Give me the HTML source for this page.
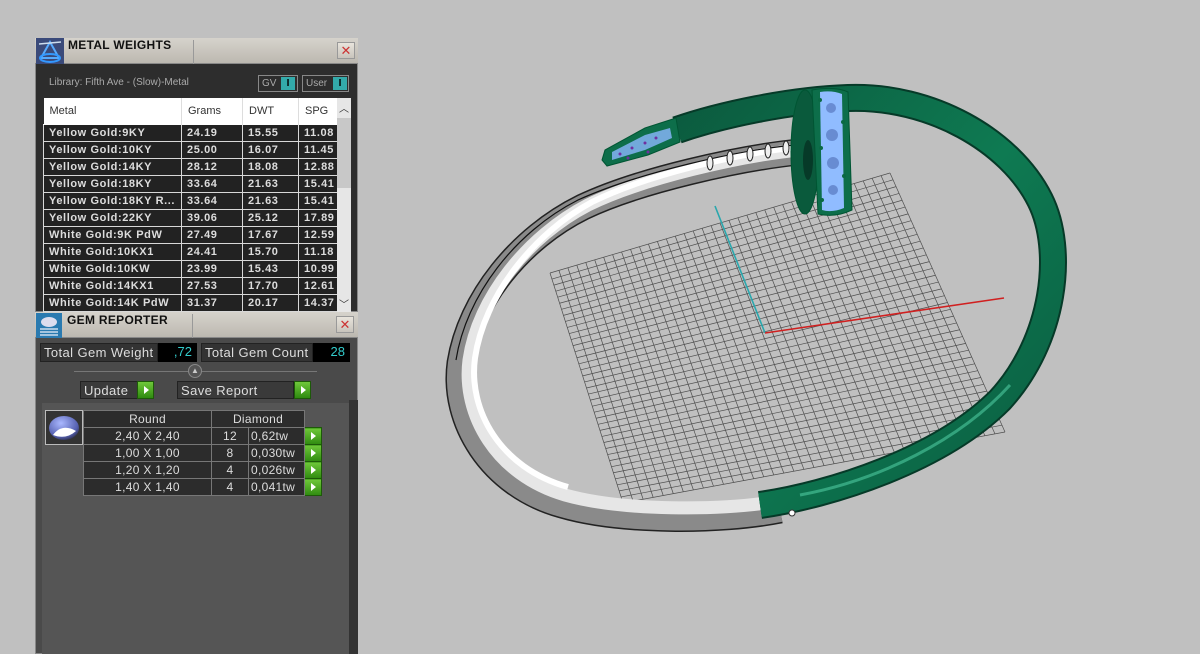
<!DOCTYPE html>
<html><head><meta charset="utf-8">
<style>
*{margin:0;padding:0;box-sizing:border-box}
body{width:1200px;height:654px;background:#c0c0c0;position:relative;overflow:hidden;font-family:"Liberation Sans","DejaVu Sans",sans-serif}
.a{position:absolute}
.title{background:linear-gradient(#d6d3cc,#bcb8b0);border-bottom:1px solid #888}
.close{width:18px;height:17px;background:linear-gradient(#e8e4dc,#c8c4bc);border:1px solid #999;color:#c33;font-size:13px;line-height:15px;text-align:center}
table{border-collapse:collapse}
.mt td{height:17px;border:1px solid #d8d8d8;border-top:1px solid #fff;color:#ddd;font-size:11px;font-weight:bold;letter-spacing:.6px;padding-left:5px;background:#222;white-space:nowrap;overflow:hidden}
.mt th{height:26px;background:#fff;color:#333;font-size:11px;font-weight:normal;text-align:left;padding-left:6px;border-right:1px solid #ddd}
.gt td{height:17px;border:1px solid #777;color:#ddd;font-size:12px;letter-spacing:.3px;text-align:center;background:#2c2c2c}
.gb,.gt td.gb{background:linear-gradient(#6fc83a,#2f8a10);border:1px solid #1d5a08}
.gb:after{content:"";position:absolute;left:6px;top:4px;border-left:5px solid #fff;border-top:4px solid transparent;border-bottom:4px solid transparent}
.fld{background:#333;border:1px solid #222;color:#ddd;font-size:13px;letter-spacing:.4px;padding-left:3px;line-height:17px}
.val{background:#000;color:#3cc;font-size:13px;text-align:right;padding-right:5px;line-height:17px}
</style></head><body>

<div class="a" style="left:35px;top:38px;width:323px;height:274px;background:#2d2d2d;border:1px solid #888"></div>
<div class="a title" style="left:35px;top:38px;width:323px;height:26px"></div>
<div class="a" style="left:193px;top:40px;width:1px;height:24px;background:#999"></div>
<svg class="a" style="left:36px;top:38px" width="28" height="26"><rect width="28" height="26" fill="#3a4a7a"/><path d="M14 4 L5 20 L23 20 Z" fill="none" stroke="#5af" stroke-width="2"/><ellipse cx="14" cy="20" rx="10" ry="4" fill="none" stroke="#39f" stroke-width="2"/><line x1="3" y1="6" x2="25" y2="4" stroke="#cde" stroke-width="1.5"/></svg>
<div class="a" style="left:68px;top:38px;font-size:12px;font-weight:bold;color:#111;letter-spacing:.3px">METAL WEIGHTS</div>
<div class="a close" style="left:337px;top:42px">✕</div>
<div class="a" style="left:49px;top:77px;font-size:10px;color:#aaa">Library: Fifth Ave - (Slow)-Metal</div>
<div class="a" style="left:258px;top:75px;width:40px;height:17px;border:1px solid #888;color:#aaa;font-size:10px;line-height:15px;padding-left:3px">GV<span class="a" style="left:22px;top:1px;width:14px;height:13px;background:#3aa;color:#000;text-align:center;font-weight:bold;line-height:13px">I</span></div>
<div class="a" style="left:302px;top:75px;width:47px;height:17px;border:1px solid #888;color:#aaa;font-size:10px;line-height:15px;padding-left:3px">User<span class="a" style="left:30px;top:1px;width:14px;height:13px;background:#3aa;color:#000;text-align:center;font-weight:bold;line-height:13px">I</span></div>
<div class="a" style="left:43px;top:98px;width:294px;height:214px;overflow:hidden">
<table class="mt" style="width:294px;table-layout:fixed">
<colgroup><col style="width:138px"><col style="width:61px"><col style="width:56px"><col style="width:39px"></colgroup>
<tr><th>Metal</th><th>Grams</th><th>DWT</th><th>SPG</th></tr>
<tr><td>Yellow Gold:9KY</td><td>24.19</td><td>15.55</td><td>11.08</td></tr>
<tr><td>Yellow Gold:10KY</td><td>25.00</td><td>16.07</td><td>11.45</td></tr>
<tr><td>Yellow Gold:14KY</td><td>28.12</td><td>18.08</td><td>12.88</td></tr>
<tr><td>Yellow Gold:18KY</td><td>33.64</td><td>21.63</td><td>15.41</td></tr>
<tr><td>Yellow Gold:18KY R...</td><td>33.64</td><td>21.63</td><td>15.41</td></tr>
<tr><td>Yellow Gold:22KY</td><td>39.06</td><td>25.12</td><td>17.89</td></tr>
<tr><td>White Gold:9K PdW</td><td>27.49</td><td>17.67</td><td>12.59</td></tr>
<tr><td>White Gold:10KX1</td><td>24.41</td><td>15.70</td><td>11.18</td></tr>
<tr><td>White Gold:10KW</td><td>23.99</td><td>15.43</td><td>10.99</td></tr>
<tr><td>White Gold:14KX1</td><td>27.53</td><td>17.70</td><td>12.61</td></tr>
<tr><td>White Gold:14K PdW</td><td>31.37</td><td>20.17</td><td>14.37</td></tr>
</table></div>
<div class="a" style="left:337px;top:98px;width:14px;height:214px;background:#e6e6e6"></div>
<div class="a" style="left:337px;top:118px;width:14px;height:70px;background:#c8c8c8"></div>
<div class="a" style="left:339px;top:100px;font-size:10px;color:#333">︿</div>
<div class="a" style="left:339px;top:296px;font-size:10px;color:#333">﹀</div>

<div class="a" style="left:35px;top:312px;width:323px;height:342px;background:#4a4a4a;border:1px solid #888"></div>
<div class="a" style="left:349px;top:400px;width:9px;height:254px;background:#333"></div>
<div class="a title" style="left:35px;top:312px;width:323px;height:26px"></div>
<div class="a" style="left:192px;top:314px;width:1px;height:24px;background:#999"></div>
<svg class="a" style="left:36px;top:313px" width="26" height="25"><rect width="26" height="25" fill="#2a7ab0"/><ellipse cx="13" cy="9" rx="8" ry="5" fill="#dde"/><g stroke="#cde" stroke-width="1.5"><line x1="4" y1="16" x2="22" y2="16"/><line x1="4" y1="19" x2="22" y2="19"/><line x1="4" y1="22" x2="22" y2="22"/></g></svg>
<div class="a" style="left:67px;top:313px;font-size:12px;font-weight:bold;color:#111;letter-spacing:.3px">GEM REPORTER</div>
<div class="a close" style="left:336px;top:316px">✕</div>
<div class="a" style="left:42px;top:403px;width:307px;height:251px;background:#555"></div>

<div class="a fld" style="left:40px;top:343px;width:118px;height:19px">Total Gem Weight</div>
<div class="a val" style="left:158px;top:343px;width:39px;height:19px">,72</div>
<div class="a fld" style="left:201px;top:343px;width:112px;height:19px">Total Gem Count</div>
<div class="a val" style="left:313px;top:343px;width:37px;height:19px">28</div>
<div class="a" style="left:74px;top:371px;width:243px;height:1px;background:#777"></div>
<div class="a" style="left:188px;top:364px;width:14px;height:14px;border-radius:50%;background:#555;border:1px solid #888;color:#ccc;font-size:8px;text-align:center;line-height:12px">▲</div>
<div class="a fld" style="left:80px;top:381px;width:58px;height:18px;background:#3a3a3a">Update</div>
<div class="a gb" style="left:137px;top:381px;width:17px;height:18px"></div>
<div class="a fld" style="left:177px;top:381px;width:117px;height:18px;background:#3a3a3a">Save Report</div>
<div class="a gb" style="left:294px;top:381px;width:17px;height:18px"></div>

<div class="a" style="left:45px;top:410px;width:38px;height:35px;border:1px solid #bbb;background:#333"></div>
<svg class="a" style="left:46px;top:413px" width="36" height="30"><defs><radialGradient id="gm" cx=".4" cy=".3" r=".8"><stop offset="0" stop-color="#aab8ff"/><stop offset=".7" stop-color="#5560b0"/><stop offset="1" stop-color="#223"/></radialGradient></defs><ellipse cx="18" cy="15" rx="15" ry="12" fill="url(#gm)"/><path d="M7 22 Q16 10 30 18 Q20 27 7 22Z" fill="#fff"/></svg>
<div class="a" style="left:83px;top:410px">
<table class="gt" style="table-layout:fixed;width:238px">
<colgroup><col style="width:128px"><col style="width:37px"><col style="width:56px"><col style="width:17px"></colgroup>
<tr><td>Round</td><td colspan="2">Diamond</td><td style="border:none;background:none"></td></tr>
<tr><td>2,40 X 2,40</td><td>12</td><td style="text-align:left;padding-left:2px">0,62tw</td><td class="gb" style="position:relative"></td></tr>
<tr><td>1,00 X 1,00</td><td>8</td><td style="text-align:left;padding-left:2px">0,030tw</td><td class="gb" style="position:relative"></td></tr>
<tr><td>1,20 X 1,20</td><td>4</td><td style="text-align:left;padding-left:2px">0,026tw</td><td class="gb" style="position:relative"></td></tr>
<tr><td>1,40 X 1,40</td><td>4</td><td style="text-align:left;padding-left:2px">0,041tw</td><td class="gb" style="position:relative"></td></tr>
</table></div>

<svg class="a" style="left:0;top:0" width="1200" height="654">
<defs>
<linearGradient id="gg" x1="0" y1="0" x2="1" y2="1"><stop offset="0" stop-color="#0b5a3e"/><stop offset=".5" stop-color="#0e7a52"/><stop offset="1" stop-color="#0a5c40"/></linearGradient>
</defs>
<g id="grid" stroke="#3a3a3a" stroke-width=".7" opacity=".85"></g>
<line x1="715" y1="206" x2="765" y2="333" stroke="#2aa7ad" stroke-width="1.6"/>
<line x1="765" y1="333" x2="1004" y2="298" stroke="#d02020" stroke-width="1.6"/>
<path d="M799 152 C740 158 640 180 583 207 C520 238 470 300 460 363 C452 420 490 485 562 505 C620 522 720 522 780 510" fill="none" stroke="#222" stroke-width="27"/>
<path d="M799 152 C740 158 640 180 583 207 C520 238 470 300 460 363 C452 420 490 485 562 505 C620 522 720 522 780 510" fill="none" stroke="#8a8a8a" stroke-width="24"/>
<path d="M799 150 C740 156 643 178 588 205 C528 236 478 298 469 360 C462 414 496 475 565 495 C622 511 720 511 780 501" fill="none" stroke="#e6e6e6" stroke-width="13"/>
<path d="M799 147 C740 153 646 175 592 202 C534 233 484 296 475 358 C468 410 500 468 568 487" fill="none" stroke="#fff" stroke-width="6"/>
<path d="M795 145 C740 150 640 172 578 200 C515 232 466 296 456 360" fill="none" stroke="#111" stroke-width="1.2"/>
<g fill="#eee" stroke="#222" stroke-width="1"><ellipse cx="710" cy="163" rx="3" ry="7"/><ellipse cx="730" cy="158" rx="3" ry="7"/><ellipse cx="750" cy="154" rx="3" ry="7"/><ellipse cx="768" cy="151" rx="3" ry="7"/><ellipse cx="786" cy="148" rx="3" ry="7"/></g>
<path d="M760 505 C830 495 940 460 1000 400 C1055 340 1065 250 1040 200 C1010 140 930 95 848 98 C790 100 720 115 677 130" fill="none" stroke="#063a28" stroke-width="28"/>
<path d="M760 505 C830 495 940 460 1000 400 C1055 340 1065 250 1040 200 C1010 140 930 95 848 98 C790 100 720 115 677 130" fill="none" stroke="url(#gg)" stroke-width="24"/>
<path d="M800 495 C880 480 960 440 1010 385" fill="none" stroke="#4fc9a0" stroke-width="3" opacity=".6"/>
<circle cx="792" cy="513" r="3" fill="#fff" stroke="#333"/>
<path d="M676 118 L645 128 L605 150 L602 160 L607 166 L648 155 L680 142 Z" fill="#0d6e4a" stroke="#053"/>
<path d="M612 152 L645 135 L670 128 L672 138 L645 150 L612 160Z" fill="#8cb8ff" opacity=".8"/>
<g fill="#7030a0"><circle cx="620" cy="154" r="1.5"/><circle cx="632" cy="148" r="1.5"/><circle cx="645" cy="143" r="1.5"/><circle cx="656" cy="138" r="1.5"/><circle cx="628" cy="158" r="1.5"/><circle cx="648" cy="152" r="1.5"/></g>
<ellipse cx="805" cy="152" rx="14" ry="62" fill="#0a5a3c" stroke="#053" />
<ellipse cx="808" cy="160" rx="5" ry="20" fill="#063a28"/>
<path d="M812 90 Q835 86 848 92 L852 210 Q835 218 818 214 Z" fill="#0d6e4a" stroke="#053"/>
<path d="M820 92 Q832 90 842 94 L844 208 Q832 213 822 210 Z" fill="#90bcff"/>
<g fill="#5878c0" opacity=".7"><circle cx="831" cy="108" r="5"/><circle cx="832" cy="135" r="6"/><circle cx="833" cy="163" r="6"/><circle cx="833" cy="190" r="5"/></g>
<g fill="#0b6a44"><circle cx="820" cy="100" r="2"/><circle cx="843" cy="122" r="2"/><circle cx="821" cy="148" r="2"/><circle cx="844" cy="176" r="2"/><circle cx="822" cy="200" r="2"/></g>
</svg>
<script>
(function(){var g=document.getElementById('grid');var TL=[550,273],TR=[890,173],BR=[1005,432],BL=[623,503];var N=38;function L(a,b,t){return[a[0]+(b[0]-a[0])*t,a[1]+(b[1]-a[1])*t]}var s='';for(var i=0;i<=N;i++){var t=i/N;var p=L(TL,TR,t),q=L(BL,BR,t);s+='<line x1="'+p[0]+'" y1="'+p[1]+'" x2="'+q[0]+'" y2="'+q[1]+'"/>';p=L(TL,BL,t);q=L(TR,BR,t);s+='<line x1="'+p[0]+'" y1="'+p[1]+'" x2="'+q[0]+'" y2="'+q[1]+'"/>';}g.innerHTML=s;})();
</script>
</body></html>
